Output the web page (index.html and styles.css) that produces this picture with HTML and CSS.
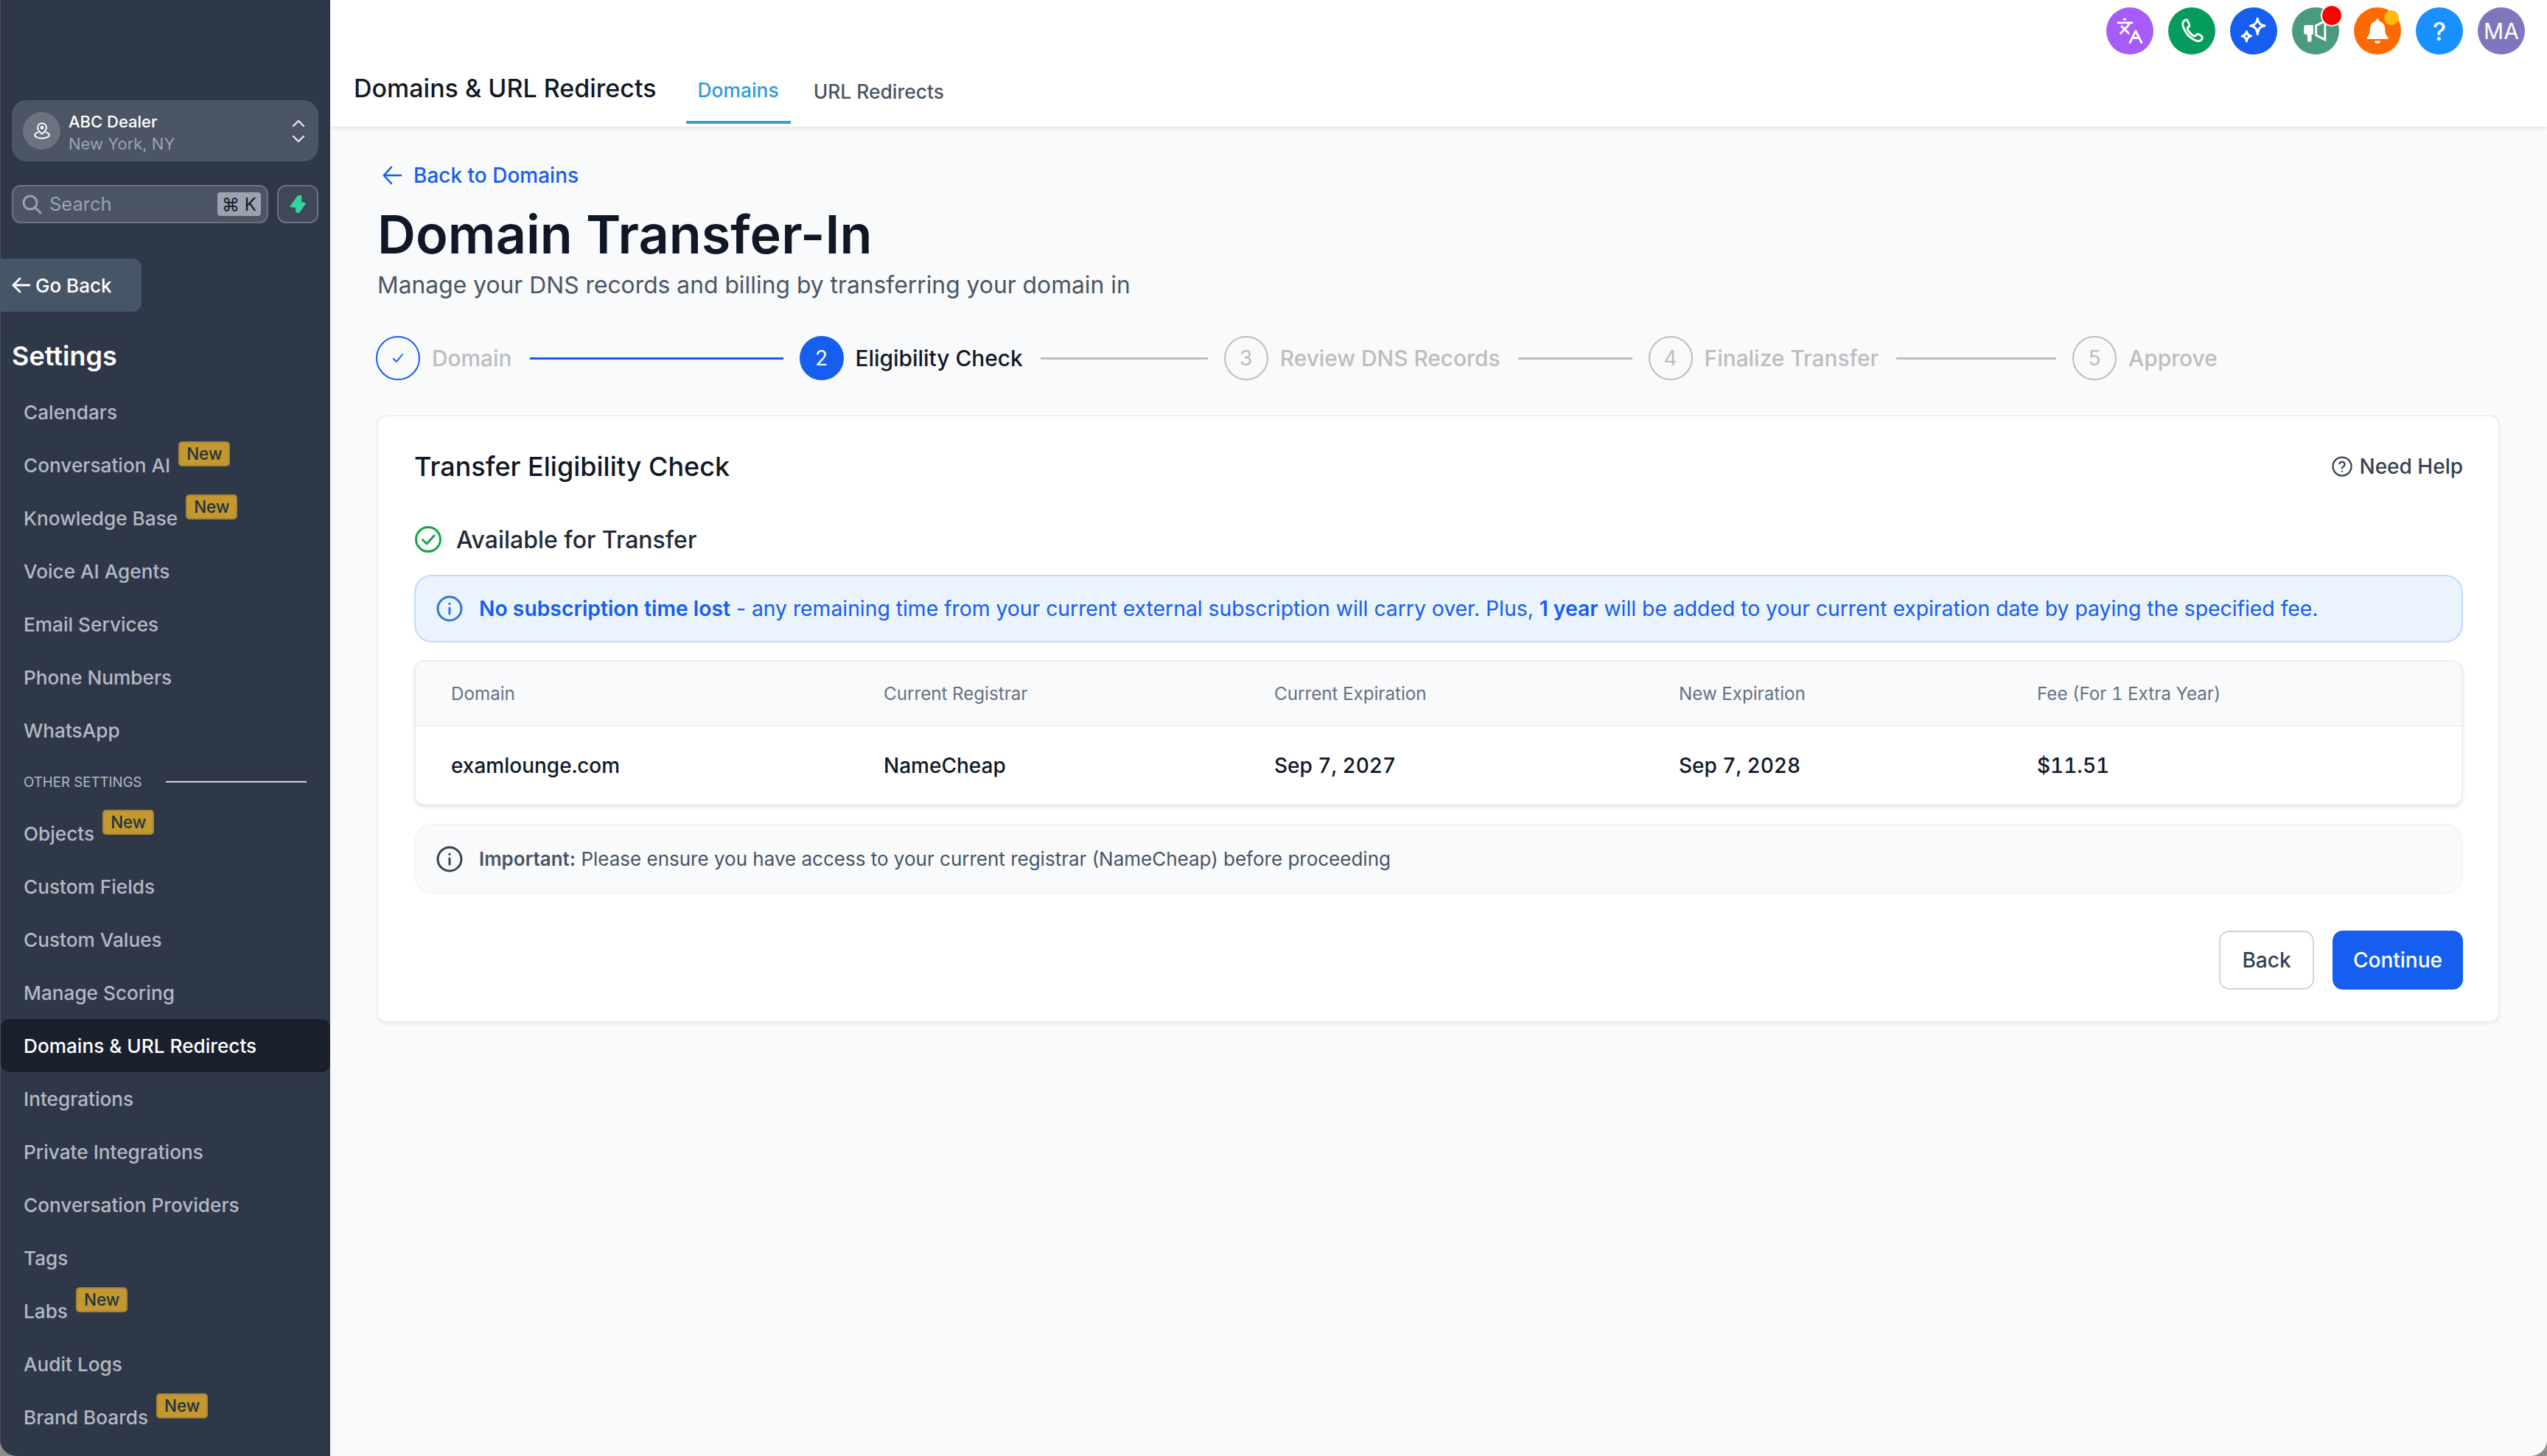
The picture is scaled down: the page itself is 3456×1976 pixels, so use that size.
FILE: index.html
```html
<!DOCTYPE html>
<html lang="en">
<head>
<meta charset="utf-8">
<title>Domain Transfer-In</title>
<link rel="stylesheet" href="styles.css">
</head>
<body>
<div class="app">
  <aside class="sidebar">
    <div class="switcher">
      <span class="loc-avatar">
        <svg width="26" height="26" viewBox="0 0 24 24" fill="none" stroke="#fff" stroke-width="1.8" stroke-linecap="round" stroke-linejoin="round"><path d="M12 2a5.5 5.5 0 0 0-5.5 5.5c0 3.5 5.500 8 5.500 8s5.500-4.500 5.500-8A5.500 5.500 0 0 0 12 2z"/><circle cx="12" cy="7.500" r="1.300"/><path d="M7 13.500c-2.500.6-4 1.800-4 3.300 0 2.400 4 4.200 9 4.200s9-1.800 9-4.200c0-1.500-1.500-2.700-4-3.300"/></svg>
      </span>
      <span class="loc-text"><span class="loc-name">ABC Dealer</span><span class="loc-city">New York, NY</span></span>
      <svg class="chev" width="18" height="32" viewBox="0 0 18 32" fill="none" stroke="#e5e7eb" stroke-width="2.400" stroke-linecap="round" stroke-linejoin="round"><path d="M2 9l7-7 7 7"/><path d="M2 23l7 7 7-7"/></svg>
    </div>
    <div class="search-row">
      <div class="search">
        <svg width="28" height="28" viewBox="0 0 28 28" fill="none" stroke="#9ca3af" stroke-width="3" stroke-linecap="round"><circle cx="12" cy="12" r="9"/><path d="M19 19l7 7"/></svg>
        <span class="search-label">Search</span>
        <span class="kbd">⌘ K</span>
      </div>
      <div class="bolt">
        <svg width="22" height="24" viewBox="0 0 22 24" fill="#34d399" stroke="#34d399" stroke-linejoin="round"><path d="M11 1 16 .5 15.500 9 21.500 11 13 23.500 9 23 8.500 16.500.5 15.500z"/></svg>
      </div>
    </div>
    <div class="go-back">
      <svg width="26" height="22" viewBox="0 0 26 22" fill="none" stroke="#fff" stroke-width="2.800" stroke-linecap="round" stroke-linejoin="round"><path d="M24 11H2"/><path d="M11 2 2 11l9 9"/></svg>
      <span>Go Back</span>
    </div>
    <h2 class="side-title">Settings</h2>
    <nav class="menu">
      <a class="item">Calendars</a>
      <a class="item">Conversation AI<span class="new">New</span></a>
      <a class="item">Knowledge Base<span class="new">New</span></a>
      <a class="item">Voice AI Agents</a>
      <a class="item">Email Services</a>
      <a class="item">Phone Numbers</a>
      <a class="item">WhatsApp</a>
      <div class="section"><span>OTHER SETTINGS</span><i></i></div>
      <a class="item">Objects<span class="new">New</span></a>
      <a class="item">Custom Fields</a>
      <a class="item">Custom Values</a>
      <a class="item">Manage Scoring</a>
      <a class="item active">Domains &amp; URL Redirects</a>
      <a class="item">Integrations</a>
      <a class="item">Private Integrations</a>
      <a class="item">Conversation Providers</a>
      <a class="item">Tags</a>
      <a class="item">Labs<span class="new">New</span></a>
      <a class="item">Audit Logs</a>
      <a class="item">Brand Boards<span class="new">New</span></a>
    </nav>
  </aside>
  <div class="content">
    <header class="header">
      <div class="top-icons">
        <span class="dot purple"><svg width="38" height="38" viewBox="0 0 24 24" fill="none" stroke="#fff" stroke-width="1.800" stroke-linecap="round" stroke-linejoin="round"><path d="m5 8 6 6"/><path d="m4 14 6-6 2-3"/><path d="M2 5h12"/><path d="M7 2h1"/><path d="m22 22-5-10-5 10"/><path d="M14 18h6"/></svg></span>
        <span class="dot green"><svg width="38" height="38" viewBox="0 0 24 24" fill="none" stroke="#fff" stroke-width="1.800" stroke-linecap="round" stroke-linejoin="round"><path d="M8.200 2.500c-1-.4-2.600.5-3.400 1.600-.9 1.300-.6 3.300.2 5.300 1.700 4.300 5.300 8.300 9.300 10.300 2 1 4 1.300 5.200.4 1-.7 1.800-2 1.500-3-.2-.7-3-2.400-3.800-2.500-.9-.1-1.900 1.800-2.700 1.900-1.600.1-6.300-4.800-6.300-6.500 0-.8 1.800-1.700 1.800-2.600 0-.8-1.300-4.100-2-4.400z"/></svg></span>
        <span class="dot blue"><svg width="42" height="42" viewBox="0 0 24 24" fill="none" stroke="#fff" stroke-width="1.800" stroke-linejoin="round"><path d="M15 2.500c.6 3.500 2 5 5.500 5.500-3.500.6-4.900 2-5.500 6.500-.6-4.500-2-5.900-5.500-6.500 3.500-.5 4.900-2 5.500-5.500z"/><path d="M6.500 12.500c.4 2.200 1.300 3.100 3.500 3.500-2.200.4-3.100 1.300-3.500 4-.4-2.700-1.300-3.600-3.500-4 2.200-.4 3.100-1.300 3.500-3.500z"/></svg></span>
        <span class="dot teal"><svg width="38" height="38" viewBox="0 0 24 24" fill="#fff"><path d="M2 8.500C2 7.700 2.700 7 3.500 7H10v8H8.500v5c0 .8-.7 1.500-1.500 1.500H6.500C5.700 21.500 5 20.800 5 20v-5H3.500C2.700 15 2 14.300 2 13.500z"/><path fill-rule="evenodd" d="M11.500 6.800 21 2v19l-9.500-4.800zM13.300 8v7l5.900 3V5z"/></svg><b class="ping red"></b></span>
        <span class="dot orange"><svg width="38" height="38" viewBox="0 0 24 24" fill="#fff"><path d="M12 1.500c.8 0 1.400.6 1.400 1.400v.7c3.200.7 5.100 3.300 5.100 6.900 0 4 1 5.500 2.600 7 .4.500.1 1.500-.7 1.500H3.600c-.8 0-1.100-1-.7-1.500 1.600-1.500 2.600-3 2.600-7 0-3.600 1.900-6.200 5.100-6.900v-.7c0-.8.600-1.400 1.400-1.400z"/><path d="M9.500 20.500h5c0 1.300-1.100 2.300-2.500 2.300s-2.500-1-2.500-2.300z"/></svg><b class="ping amber"></b></span>
        <span class="dot sky"><span class="q">?</span></span>
        <span class="dot indigo"><span class="ma">MA</span></span>
      </div>
      <div class="nav-row">
        <h1 class="page-name">Domains &amp; URL Redirects</h1>
        <div class="tabs">
          <a class="tab current">Domains</a>
          <a class="tab">URL Redirects</a>
        </div>
      </div>
    </header>
    <main class="main">
      <a class="back-link">
        <svg width="28" height="28" viewBox="0 0 28 28" fill="none" stroke="#155eef" stroke-width="2.600" stroke-linecap="round" stroke-linejoin="round"><path d="M26 14H3"/><path d="M13 3 3 14l10 11"/></svg>
        <span>Back to Domains</span>
      </a>
      <h2 class="heading">Domain Transfer-In</h2>
      <p class="sub">Manage your DNS records and billing by transferring your domain in</p>
      <div class="steps">
        <span class="circle done"><svg width="20" height="20" viewBox="0 0 20 20" fill="none" stroke="#155eef" stroke-width="2" stroke-linecap="round" stroke-linejoin="round"><path d="M4 11l4 4 8-10"/></svg></span>
        <span class="label muted">Domain</span>
        <i class="line line-a on"></i>
        <span class="circle now">2</span>
        <span class="label strong">Eligibility Check</span>
        <i class="line line-b"></i>
        <span class="circle">3</span>
        <span class="label muted">Review DNS Records</span>
        <i class="line line-c"></i>
        <span class="circle">4</span>
        <span class="label muted">Finalize Transfer</span>
        <i class="line line-d"></i>
        <span class="circle">5</span>
        <span class="label muted">Approve</span>
      </div>
      <section class="card">
        <div class="card-head">
          <h3 class="card-title">Transfer Eligibility Check</h3>
          <a class="help">
            <svg width="30" height="30" viewBox="0 0 24 24" fill="none" stroke="#374151" stroke-width="1.800" stroke-linecap="round" stroke-linejoin="round"><circle cx="12" cy="12" r="10"/><path d="M9.100 9a3 3 0 0 1 5.800 1c0 2-3 2.500-3 4"/><path d="M12 17.500h.01"/></svg>
            <span>Need Help</span>
          </a>
        </div>
        <div class="status">
          <svg width="38" height="38" viewBox="0 0 38 38" fill="none" stroke="#16a34a" stroke-width="3" stroke-linecap="round" stroke-linejoin="round"><circle cx="19" cy="19" r="16.500"/><path d="M11.500 19.500l5.500 5.500 10-11"/></svg>
          <span>Available for Transfer</span>
        </div>
        <div class="note info">
          <svg width="36" height="36" viewBox="0 0 36 36" fill="none" stroke="#2a78d8" stroke-width="3" stroke-linecap="round"><circle cx="18" cy="18" r="16"/><path d="M18 17v8"/><path d="M18 11v.5"/></svg>
          <p><strong>No subscription time lost</strong> - any remaining time from your current external subscription will carry over. Plus, <strong>1 year</strong> will be added to your current expiration date by paying the specified fee.</p>
        </div>
        <div class="table">
          <div class="tr th">
            <span>Domain</span><span>Current Registrar</span><span>Current Expiration</span><span>New Expiration</span><span>Fee (For 1 Extra Year)</span>
          </div>
          <div class="tr td">
            <span>examlounge.com</span><span>NameCheap</span><span>Sep 7, 2027</span><span>Sep 7, 2028</span><span>$11.51</span>
          </div>
        </div>
        <div class="note plain">
          <svg width="36" height="36" viewBox="0 0 36 36" fill="none" stroke="#374151" stroke-width="3" stroke-linecap="round"><circle cx="18" cy="18" r="16"/><path d="M18 17v8"/><path d="M18 11v.5"/></svg>
          <p><strong>Important:</strong> Please ensure you have access to your current registrar (NameCheap) before proceeding</p>
        </div>
        <div class="actions">
          <button class="btn ghost">Back</button>
          <button class="btn primary">Continue</button>
        </div>
      </section>
    </main>
  </div>
</div>
</body>
</html>
```
FILE: styles.css
```css
* { box-sizing: border-box; }
html, body { margin: 0; height: 100%; }
body { background: #8d8d8a; font-family: Inter, "Noto Sans", sans-serif; overflow: hidden; }
a { text-decoration: none; color: inherit; }
h1, h2, h3, p { margin: 0; font-weight: inherit; }
i, b { display: block; font-style: normal; }

.app { display: flex; height: 1976px; border-radius: 0 0 22px 22px; overflow: hidden; background: #f9fafb; }

.sidebar { width: 448px; flex: none; background: #2f3848; border-left: 1px solid #4a5260; padding-top: 136px; color: #fff; }
.switcher { margin: 0 16px 0 15px; height: 83px; border-radius: 20px; background: #4b5563; display: flex; align-items: center; padding: 0 18px 0 15px; }
.loc-avatar { width: 51px; height: 51px; border-radius: 50%; background: #6b7280; display: flex; align-items: center; justify-content: center; flex: none; }
.loc-text { display: flex; flex-direction: column; margin: 5px 0 0 11px; flex: 1; font-size: 22px; line-height: 30px; }
.loc-name { font-weight: 500; color: #fff; }
.loc-city { color: #9ca3af; }

.search-row { display: flex; gap: 12px; margin: 32px 16px 0 15px; }
.search { flex: 1; height: 52px; border-radius: 12px; border: 2px solid #6b7280; background: #4b5563; display: flex; align-items: center; padding: 0 8px 0 11px; }
.search-label { flex: 1; margin: -1px 0 0 10px; font-size: 25.500px; color: #9ca3af; }
.kbd { width: 59px; height: 32px; border-radius: 4px; background: #9ca3af; color: #111827; font-size: 24px; display: flex; align-items: center; justify-content: center; }
.bolt { width: 56px; height: 52px; border-radius: 12px; border: 2px solid #6b7280; background: #3f4858; display: flex; align-items: center; justify-content: center; }

.go-back { margin: 48px 0 0 -1px; width: 192px; height: 72px; border-radius: 0 12px 12px 0; background: #475569; display: flex; align-items: center; gap: 6px; padding-left: 16px; font-size: 26px; font-weight: 500; }
.side-title { margin: 38px 0 0 15px; font-size: 36px; line-height: 44px; font-weight: 600; color: #fff; }

.menu { margin-top: 18px; }
.item { display: flex; align-items: center; height: 72px; padding-left: 31px; font-size: 26.200px; font-weight: 500; color: #b4b9c4; border-radius: 12px; }
.item.active { background: #1a202e; color: #fff; }
.new { align-self: flex-start; margin: 4px 0 0 11px; height: 34px; padding: 0 9px; border: 2px solid #a8853a; border-radius: 5px; background: #c4982e; color: #1d3340; font-size: 22.400px; line-height: 29px; font-weight: 500; }
.section { height: 68px; display: flex; align-items: center; padding-left: 31px; font-size: 18.700px; color: #b4b9c4; font-weight: 400; }
.section i { width: 191px; height: 2px; margin-left: 32px; background: #d1d5db; }

.content { flex: 1; display: flex; flex-direction: column; min-width: 0; }
.header { height: 172px; background: #fff; box-shadow: 0 2px 5px rgba(0,0,0,.1); flex: none; }
.top-icons { height: 84px; display: flex; justify-content: flex-end; gap: 20px; padding: 10px 30px 0 0; }
.dot { position: relative; width: 64px; height: 64px; border-radius: 50%; display: flex; align-items: center; justify-content: center; color: #fff; }
.purple { background: #a75cf6; }
.green { background: #059b5c; }
.blue { background: #155eef; }
.teal { background: #4a9a80; }
.orange { background: #ff6a00; }
.sky { background: #1890ff; }
.indigo { background: #7f77be; }
.q { font-size: 34px; font-weight: 500; }
.ma { font-size: 30px; font-weight: 400; }
.ping { position: absolute; border-radius: 50%; }
.red { width: 26px; height: 26px; top: -2px; right: -3px; background: #ff0000; box-shadow: 0 0 0 2px #fff; }
.amber { width: 20px; height: 20px; top: 4px; right: 3px; background: #ffb90f; }

.nav-row { display: flex; height: 88px; padding-left: 32px; }
.page-name { font-size: 34px; font-weight: 500; color: #111827; line-height: 44px; margin-top: 14px; }
.tabs { display: flex; margin-left: 40px; height: 84px; }
.tab { padding: 22px 16px 0; font-size: 26.400px; font-weight: 500; line-height: 36px; color: #4b5563; border-bottom: 4px solid transparent; margin-right: 15px; }
.tab.current { color: #2f9bd6; border-bottom-color: #3b9fd8; padding-top: 20px; }

.main { flex: 1; padding: 0 64px 0 62px; }
.back-link { display: flex; align-items: center; gap: 15px; margin-top: 48px; padding-left: 8px; height: 36px; color: #155eef; font-size: 28px; font-weight: 500; }
.heading { font-size: 72px; line-height: 84px; font-weight: 600; color: #101828; margin: 20px 0 0 2px; }
.sub { font-size: 31.800px; line-height: 44px; color: #4b5563; margin: 5px 0 0 2px; }
.steps { display: flex; align-items: center; height: 60px; margin-top: 47px; }
.circle { width: 60px; height: 60px; flex: none; border-radius: 50%; border: 2px solid #bdbdbd; color: #bdbdbd; font-size: 28px; display: flex; align-items: center; justify-content: center; }
.circle.done { border-color: #155eef; }
.circle.now { background: #155eef; border-color: #155eef; color: #fff; }
.label { margin-left: 16px; font-size: 29.850px; font-weight: 500; white-space: nowrap; }
.muted { color: #bdbdbd; }
.strong { color: #101828; }
.line { height: 3px; background: #bdbdbd; margin-left: 24px; margin-right: 22px; flex: none; }
.line.on { background: #155eef; }
.line-a { width: 344px; }
.line-b { width: 227px; }
.line-c { width: 155px; }
.line-d { width: 217px; }

.card { margin: 47px 0 0 1px; height: 825px; background: #fff; border: 2px solid #eceef1; border-radius: 14px; box-shadow: 0 2px 3px rgba(0,0,0,.06); padding: 0 48px 0 49px; }
.card-head { display: flex; justify-content: space-between; align-items: center; height: 92px; margin-top: 22px; }
.card-title { font-size: 36px; font-weight: 500; color: #101828; }
.help { display: flex; align-items: center; gap: 8px; font-size: 28px; font-weight: 500; color: #374151; }
.status { display: flex; align-items: center; gap: 19px; margin-top: 31px; height: 44px; font-size: 32px; font-weight: 500; color: #1f2937; }
.note { display: flex; align-items: center; gap: 22px; padding: 0 28px; border-radius: 24px; }
.note p { font-size: 28.300px; }
.note strong { font-weight: 600; }
.info { margin-top: 26px; height: 92px; background: #ebf3fd; border: 2px solid #bfdbfe; color: #155eef; }
.table { margin-top: 24px; height: 197px; border: 2px solid #eceef1; border-radius: 14px; overflow: hidden; box-shadow: 0 3px 4px rgba(0,0,0,.1); font-variant-numeric: tabular-nums; }
.tr { display: grid; grid-template-columns: 587px 530px 549px 486px 1fr; padding-left: 48px; align-items: center; }
.th { height: 88px; background: #f9fafb; border-bottom: 2px solid #eceef1; font-size: 24.200px; font-weight: 400; color: #667085; }
.td { height: 105px; font-size: 28px; font-weight: 500; color: #101828; }
.plain { margin-top: 25px; height: 95px; background: #f9fafb; border: 2px solid #f2f4f7; color: #475467; }
.plain p { font-size: 26px; }
.actions { display: flex; justify-content: flex-end; gap: 25px; margin-top: 50px; }
.btn { height: 80px; border-radius: 14px; font: 500 28px Inter, "Noto Sans", sans-serif; }
.ghost { width: 129px; background: #fff; border: 2px solid #d0d5dd; color: #344054; }
.primary { width: 177px; background: #155eef; border: 2px solid #155eef; color: #fff; }
```
